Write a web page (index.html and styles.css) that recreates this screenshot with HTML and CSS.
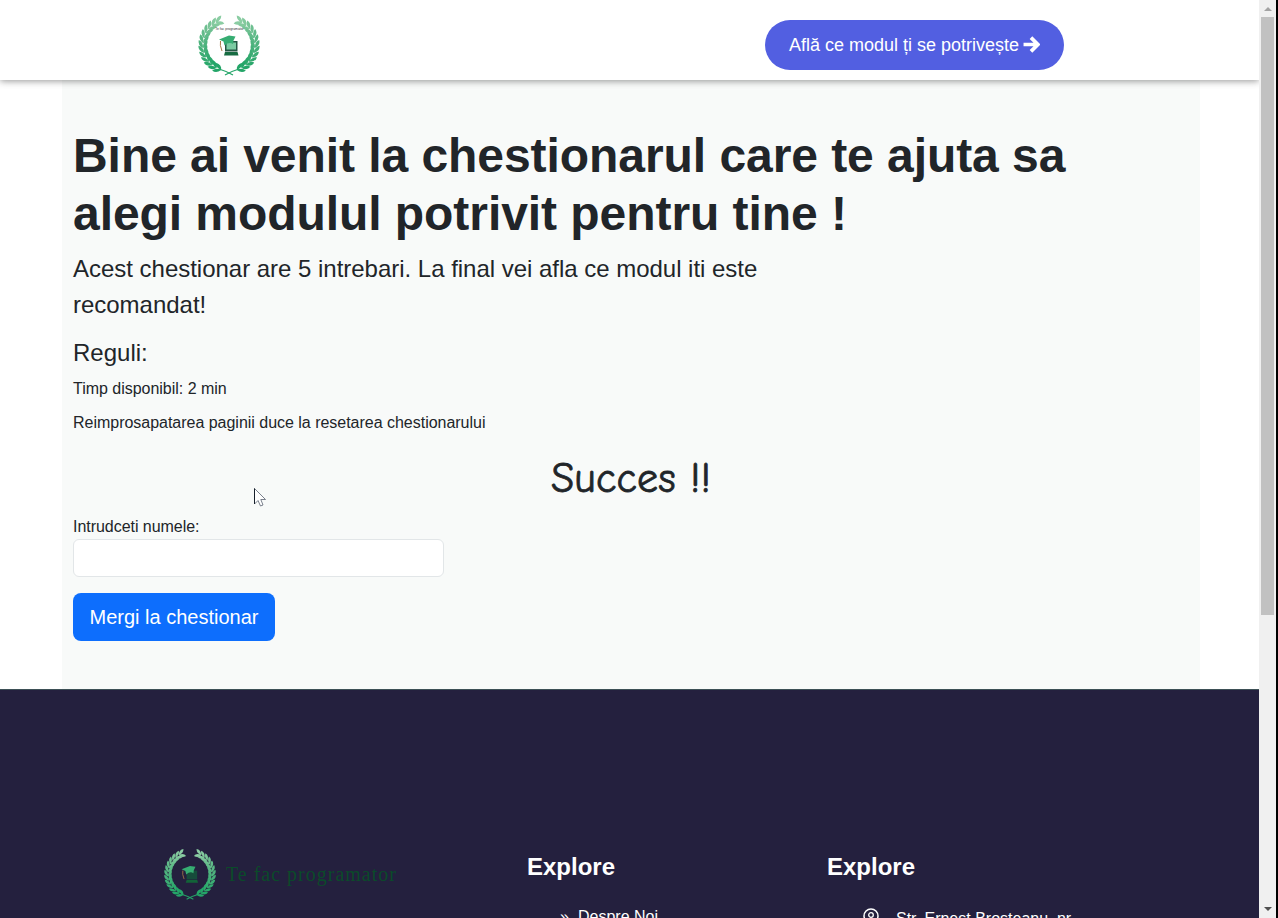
FILE: index.html
```
<!DOCTYPE html>
<html lang="ro">
<head>
<meta charset="utf-8">
<title>Te fac programator</title>
<link rel="stylesheet" href="styles.css">
</head>
<body>
<svg class="defs" width="0" height="0">
  <defs>
    <path id="pair" d="M35 6Q32 .4 27 1.800Q29 6.500 35 6ZM35 6Q28.500 5.600 27.500 10.500Q33.500 11 35 6Z"/>
    <g id="branch">
      <use href="#pair" transform="rotate(24 32 32)" fill="#8bcda3"/>
      <use href="#pair" transform="rotate(35 32 32)" fill="#83c99d"/>
      <use href="#pair" transform="rotate(46 32 32)" fill="#79c497"/>
      <use href="#pair" transform="rotate(57 32 32)" fill="#6dbf90"/>
      <use href="#pair" transform="rotate(68 32 32)" fill="#62bb8a"/>
      <use href="#pair" transform="rotate(79 32 32)" fill="#58b784"/>
      <use href="#pair" transform="rotate(90 32 32)" fill="#4eb37e"/>
      <use href="#pair" transform="rotate(101 32 32)" fill="#45b079"/>
      <use href="#pair" transform="rotate(112 32 32)" fill="#3cad74"/>
      <use href="#pair" transform="rotate(123 32 32)" fill="#34aa70"/>
      <use href="#pair" transform="rotate(134 32 32)" fill="#2ca86c"/>
      <use href="#pair" transform="rotate(145 32 32)" fill="#24a568"/>
      <use href="#pair" transform="rotate(156 32 32)" fill="#24a568"/>
      <path d="M42 56Q35 58 28 62" fill="none" stroke="#24a568" stroke-width="1.2"/>
    </g>
    <g id="wreath">
      <use href="#branch"/>
      <use href="#branch" transform="matrix(-1 0 0 1 64 0)"/>
    </g>
    <g id="cap">
      <path d="M22 26.500L32 22.500L38.500 23.500L36.500 27.500L36 31Q32 28.500 27.500 32.500L26.500 28.500Z" fill="#36ad72"/>
      <path d="M23.500 28Q22.500 32 25 38" fill="none" stroke="#a97845" stroke-width="1"/>
    </g>
  </defs>
</svg>
<div class="window">
  <div class="page">
    <header class="header">
      <svg class="logo" viewBox="0 0 64 64">
        <use href="#wreath"/>
        <text class="logo-label" x="32.500" y="16.800" text-anchor="middle">Te fac programator</text>
        <path d="M28 28H40.500V38.500H28Z" fill="#245744"/>
        <path d="M29.500 29.500H39V36.500H29.500Z" fill="#7bcba2"/>
        <path d="M28 39H40.500L41.500 42.500H27Z" fill="#176c42"/>
        <use href="#cap"/>
      </svg>
      <a class="pill">Află ce modul ți se potrivește
        <svg class="arrow" viewBox="0 0 16 16"><path d="M.5 8H13M7.500 1.500L14 8L7.500 14.500" fill="none" stroke="#fff" stroke-width="3.500"/></svg>
      </a>
    </header>
    <main class="quiz">
      <h1 class="title">Bine ai venit la chestionarul care te ajuta sa alegi modulul potrivit pentru tine !</h1>
      <p class="lead">Acest chestionar are 5 intrebari. La final vei afla ce modul iti este recomandat!</p>
      <h2 class="rules">Reguli:</h2>
      <p class="rule rule-time">Timp disponibil: 2 min</p>
      <p class="rule rule-reset">Reimprosapatarea paginii duce la resetarea chestionarului</p>
      <p class="success">Succes !!</p>
      <label class="label" for="name">Intrudceti numele:</label>
      <input class="field" id="name" type="text">
      <button class="submit">Mergi la chestionar</button>
    </main>
    <footer class="footer">
      <div class="brand">
        <svg class="brand-logo" viewBox="0 0 64 64">
          <use href="#wreath"/>
          <path d="M28 28H40.500V38.500H28Z" fill="#164c3b"/>
          <path d="M28 39H40.500L41.500 42.500H27Z" fill="#126338"/>
          <use href="#cap"/>
        </svg>
        <span class="brand-name">Te fac programator</span>
      </div>
      <section class="column">
        <h3 class="heading">Explore</h3>
        <div class="item"><span class="bullet">»</span><span>Despre Noi</span></div>
      </section>
      <section class="column">
        <h3 class="heading">Explore</h3>
        <div class="item"><svg class="pin" viewBox="0 0 16 20"><path d="M8 19Q1 12 1 8A7 7 0 0 1 15 8Q15 12 8 19Z" fill="none" stroke="#fff" stroke-width="1.500"/><circle cx="8" cy="7" r="2.300" fill="none" stroke="#fff" stroke-width="1.300"/><path d="M4 13Q8 8 12 13" fill="none" stroke="#fff"/></svg><span class="address">Str. Ernest Broșteanu, nr.</span></div>
      </section>
    </footer>
  </div>
  <div class="scrollbar">
    <svg class="up" viewBox="0 0 8 4"><path d="M0 4L4 0L8 4Z" fill="#a3a3a3"/></svg>
    <div class="thumb"></div>
    <svg class="down" viewBox="0 0 8 4"><path d="M0 0H8L4 4Z" fill="#505050"/></svg>
  </div>
</div>
<svg class="cursor" viewBox="0 0 12 19"><path d="M.5 .5V16L4 12.500L6.500 18L9 17L6.800 11.500H11.500Z" fill="#fff" stroke="#596170" stroke-width=".8"/><path d="M.5 .5V16" stroke="#17202b"/></svg>
</body>
</html>
```
FILE: styles.css
```
* { box-sizing: border-box; }
body {
  margin: 0;
  height: 918px;
  overflow: hidden;
  font: 16px/24px "Liberation Sans", Arial, sans-serif;
  color: #212529;
  background: #fff;
}
.defs { position: absolute; }
.window { display: flex; height: 918px; background: #000; }
.page { width: 1259px; height: 918px; overflow: hidden; background: #fff; }
.header {
  position: relative;
  display: flex;
  justify-content: space-between;
  align-items: center;
  height: 80px;
  padding: 0 195px 0 197px;
  background: #fff;
  box-shadow: 0 1px 7px rgba(0, 0, 0, .42);
}
.logo { width: 64px; height: 64px; margin-top: 9px; }
.logo-label { font: 3.400px "Liberation Sans", sans-serif; fill: #333; }
.pill {
  display: flex;
  align-items: center;
  gap: 4px;
  width: 299px;
  height: 50px;
  margin-top: 9px;
  padding-left: 24px;
  border-radius: 25px;
  background: #525fe1;
  color: #fff;
  font-size: 18px;
  white-space: nowrap;
}
.arrow { width: 17px; height: 17px; }
.quiz {
  width: 1138px;
  height: 609px;
  margin-left: 62px;
  padding: 47px 11px 0;
  background: #f8faf9;
}
.title { width: 1080px; margin: 0; font-size: 48px; line-height: 58px; font-weight: 700; letter-spacing: -.06px; }
.lead { width: 720px; margin: 8px 0 0; font-size: 24px; line-height: 36px; letter-spacing: -.02px; }
.rules { margin: 15px 0 0; font-size: 24px; line-height: 29px; font-weight: 400; }
.rule { margin: 0 0 10px; letter-spacing: -.02px; }
.rule-time { margin-top: 10px; }
.success {
  height: 60px;
  margin: 14px 0 6px;
  font: 42px/60px "Comic Sans MS", "Comic Neue", Lato, sans-serif;
  letter-spacing: .2px;
  -webkit-text-stroke: .8px #212529;
  text-align: center;
}
.label { display: block; letter-spacing: -.04px; }
.field {
  display: block;
  width: 371px;
  height: 38px;
  border: 1px solid #e2e6e8;
  border-radius: 6px;
  background: #fff;
}
.submit {
  width: 202px;
  height: 48px;
  margin-top: 16px;
  padding: 0;
  border: 0;
  border-radius: 8px;
  background: #0d6efd;
  color: #fff;
  font: 20px/48px "Liberation Sans", Arial, sans-serif;
}
.footer {
  display: grid;
  grid-template-columns: 364px 300px 400px;
  height: 229px;
  padding: 157px 0 0 163px;
  border-top: 1px solid #3d5056;
  background: #24203e;
  color: #fff;
}
.brand { display: flex; align-items: center; gap: 9px; height: 54px; }
.brand-logo { width: 54px; height: 54px; }
.brand-name { color: #0b4a2a; font: 20px/28px "Liberation Serif", serif; letter-spacing: 1px; white-space: nowrap; }
.heading { margin: 5px 0 24px; font-size: 24px; line-height: 29px; }
.item { display: flex; padding-left: 33px; white-space: nowrap; }
.bullet { width: 18px; }
.pin { width: 16px; height: 20px; margin: 3px 17px 0 3px; }
.address { margin-top: 2px; }
.scrollbar {
  display: flex;
  flex-direction: column;
  align-items: center;
  width: 17px;
  height: 918px;
  background: #f0f0f0;
}
.up { width: 8px; height: 4px; margin: 7px 0 6px; }
.thumb { width: 13px; height: 598px; background: #c1c1c1; }
.down { width: 8px; height: 4px; margin-top: auto; margin-bottom: 7px; }
.cursor { position: absolute; left: 254px; top: 488px; width: 12px; height: 19px; }
```
